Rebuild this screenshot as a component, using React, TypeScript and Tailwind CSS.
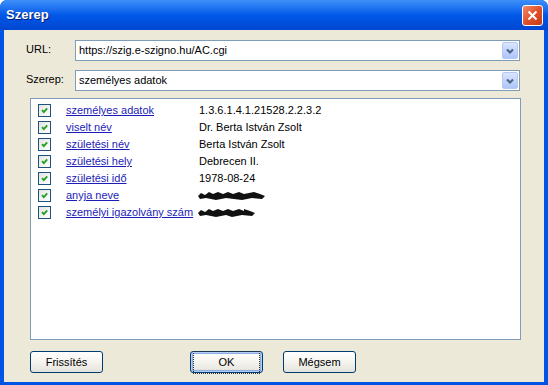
import React from 'react'

const ROWS = [
  { name: 'személyes adatok', value: '1.3.6.1.4.1.21528.2.2.3.2' },
  { name: 'viselt név', value: 'Dr. Berta István Zsolt' },
  { name: 'születési név', value: 'Berta István Zsolt' },
  { name: 'születési hely', value: 'Debrecen II.' },
  { name: 'születési idő', value: '1978-08-24' },
  { name: 'anyja neve', value: null, blot: 70 },
  { name: 'személyi igazolvány szám', value: null, blot: 60 },
]

function Chevron() {
  return (
    <span className="ml-auto mr-[1px] flex h-[17px] w-[16px] items-center justify-center rounded-[2px] border border-[#b5c8f2] bg-gradient-to-b from-[#dce6fd] via-[#c3d5fb] to-[#aec5f6]">
      <svg width="8" height="6" viewBox="0 0 8 6">
        <path d="M1 1.5 L4 4.5 L7 1.5" fill="none" stroke="#4d6185" strokeWidth="2" />
      </svg>
    </span>
  )
}

function Combo({ text }: { text: string }) {
  return (
    <div className="flex h-[21px] items-center border border-[#7f9db9] bg-white pl-[3px] text-[11px] text-black">
      <span>{text}</span>
      <Chevron />
    </div>
  )
}

function Check() {
  return (
    <span className="flex h-[13px] w-[13px] items-center justify-center border border-[#1c5180] bg-gradient-to-br from-[#e4e4de] to-white">
      <svg width="9" height="9" viewBox="0 0 9 9">
        <path d="M2 4.2 L3.8 6.2 L7.2 2.4" fill="none" stroke="#21a121" strokeWidth="1.8" />
      </svg>
    </span>
  )
}

function Blot({ w }: { w: number }) {
  return (
    <svg width={w} height="10" viewBox={`0 0 ${w} 10`} className="-ml-[3px]">
      <path
        d={`M2 5 L5 2 L9 4 L13 1 L17 3 L22 1 L27 3 L32 1 L37 3 L43 1 L48 3 L${w - 12} 1 L${w - 6} 3 L${w - 1} 5 L${w - 4} 8 L${w - 14} 7 L${w - 24} 9 L30 7 L20 9 L10 7 L4 8 Z`}
        fill="#111"
      />
    </svg>
  )
}

function Btn({ label, focused }: { label: string; focused?: boolean }) {
  return (
    <button
      className={`h-[22px] w-[73px] rounded-[3px] border border-[#003c74] bg-gradient-to-b from-white via-[#f5f4ef] to-[#e3e2da] text-[11px] text-black ${
        focused ? 'shadow-[inset_0_0_0_1px_#b6cdf1,inset_0_0_0_2px_#89ade4]' : ''
      }`}
    >
      <span className={focused ? 'block mx-[3px] py-[2px] outline-1 outline-dotted outline-[#333]' : ''}>
        {label}
      </span>
    </button>
  )
}

export default function App() {
  return (
    <div
      className="flex h-[385px] w-[548px] flex-col overflow-hidden rounded-t-[7px] bg-[#0054e3]"
      style={{ fontFamily: '"Liberation Sans", Arial, sans-serif' }}
    >
      <div className="flex h-[30px] shrink-0 items-center bg-gradient-to-b from-[#3d8ff8] via-[#0058e8] to-[#0046d0] pl-[6px] pr-[5px]">
        <span className="text-[13px] font-bold text-white [text-shadow:1px_1px_0_#0a1e6e]">Szerep</span>
        <span className="ml-auto flex h-[21px] w-[21px] items-center justify-center rounded-[3px] border border-white bg-gradient-to-br from-[#f08a6a] via-[#e0502a] to-[#c23a14]">
          <svg width="11" height="11" viewBox="0 0 11 11">
            <path d="M1.5 1.5 L9.5 9.5 M9.5 1.5 L1.5 9.5" stroke="white" strokeWidth="2" />
          </svg>
        </span>
      </div>

      <div className="mx-[4px] mb-[3px] flex flex-1 flex-col bg-[#ece9d8] pl-[22px] pr-[24px] pt-[10px] text-[11px] text-black">
        <div className="grid grid-cols-[49px_1fr] items-center gap-y-[9px]">
          <span className="pb-[3px]">URL:</span>
          <Combo text="https://szig.e-szigno.hu/AC.cgi" />
          <span className="pb-[3px]">Szerep:</span>
          <Combo text="személyes adatok" />
        </div>

        <div className="ml-[4px] mr-[-1px] mt-[7px] h-[242px] border border-[#7f9db9] bg-white pl-[7px] pt-[3px]">
          {ROWS.map((r) => (
            <div key={r.name} className="flex h-[17px] items-center">
              <Check />
              <span className="ml-[15px] w-[133px] text-[#1c1cb8] underline underline-offset-[1px]">{r.name}</span>
              {r.value ? <span>{r.value}</span> : <Blot w={r.blot ?? 60} />}
            </div>
          ))}
        </div>

        <div className="ml-[4px] mt-[11px] flex">
          <Btn label="Frissítés" />
          <div className="ml-[87px]">
            <Btn label="OK" focused />
          </div>
          <div className="ml-[20px]">
            <Btn label="Mégsem" />
          </div>
        </div>
      </div>
    </div>
  )
}
